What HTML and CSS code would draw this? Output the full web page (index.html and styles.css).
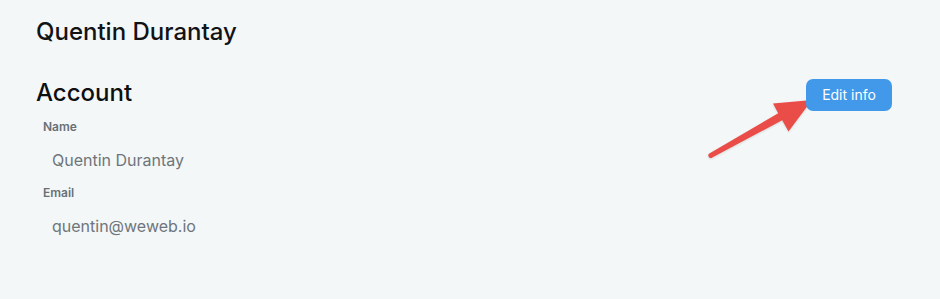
FILE: index.html
```html
<!DOCTYPE html>
<html lang="en">
<head>
<meta charset="utf-8">
<title>Account</title>
<link rel="stylesheet" href="styles.css">
</head>
<body>
<div class="page">
  <h1 class="title">Quentin Durantay</h1>
  <div class="account-head">
    <h2 class="section-title">Account</h2>
    <button class="edit-btn" type="button">Edit info</button>
  </div>
  <div class="field">
    <div class="label">Name</div>
    <div class="value">Quentin Durantay</div>
  </div>
  <div class="field">
    <div class="label">Email</div>
    <div class="value">quentin@weweb.io</div>
  </div>
  <svg class="arrow" width="940" height="299" viewBox="0 0 940 299" aria-hidden="true">
    <path d="M709.3 153.6 L778.2 113.3 L773 103.5 L812 100 L788.5 131.5 L782.2 120.3 L712.3 157.4 A2.2 2.2 0 0 1 709.3 153.6 Z" fill="#ea4d47"/>
  </svg>
</div>
</body>
</html>
```

FILE: styles.css
```css
* { box-sizing: border-box; }
html, body { margin: 0; padding: 0; }
body {
  background: #f4f7f8;
  font-family: Inter, "Noto Sans", sans-serif;
  width: 940px;
  height: 299px;
  overflow: hidden;
}
.page {
  position: relative;
  padding: 18px 48px 0 36px;
  height: 299px;
}
.title {
  margin: 0;
  font-size: 24px;
  line-height: 28px;
  font-weight: 500;
  color: #111315;
}
.account-head {
  margin-top: 33px;
  display: flex;
  justify-content: space-between;
  align-items: flex-start;
}
.section-title {
  margin: 0;
  font-size: 24px;
  line-height: 28px;
  font-weight: 500;
  color: #0d0f10;
}
.edit-btn {
  position: relative;
  z-index: 1;
  height: 32px;
  width: 86px;
  padding: 0;
  border: none;
  border-radius: 7px;
  background: #4299ea;
  color: #ffffff;
  font-family: Inter, "Noto Sans", sans-serif;
  font-size: 14px;
  line-height: 32px;
  font-weight: 400;
}
.field { padding-top: 8px; }
.field + .field { padding-top: 0; }
.label {
  padding-left: 7px;
  font-size: 12px;
  line-height: 16px;
  font-weight: 600;
  color: #687076;
}
.value {
  margin-top: 13px;
  margin-bottom: 13px;
  padding-left: 16px;
  font-size: 16px;
  line-height: 24px;
  font-weight: 400;
  color: #6e757b;
}
.arrow {
  position: absolute;
  left: 0;
  top: 0;
  z-index: 0;
  pointer-events: none;
  filter: drop-shadow(0 1px 1px rgba(0,0,0,0.12));
}
```
